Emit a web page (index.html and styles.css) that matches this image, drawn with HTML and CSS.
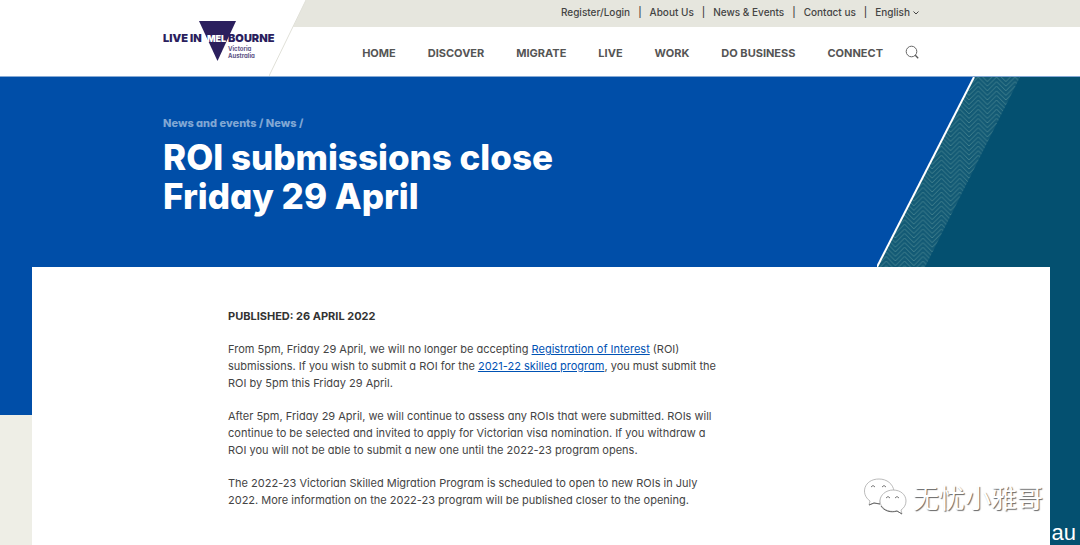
FILE: index.html
```html
<!DOCTYPE html>
<html lang="en">
<head>
<meta charset="utf-8">
<meta name="viewport" content="width=device-width, initial-scale=1">
<title>ROI submissions close Friday 29 April</title>
<link rel="stylesheet" href="styles.css">
</head>
<body>
<header class="site-header">
  <a class="brand" href="#" aria-label="Live in Melbourne, Victoria Australia">
    <svg class="logo" width="112" height="42" viewBox="0 0 112 42" aria-hidden="true">
      <polygon points="36,1 73,1 54.500,41" fill="#2b1f5e"/>
      <g class="logo-word">
        <text x="0" y="22">LIVE IN</text>
        <text class="logo-light" x="44" y="22">MEL</text>
        <text x="65" y="22">BOURNE</text>
      </g>
      <g class="logo-place">
        <text x="65" y="31">Victoria</text>
        <text x="65" y="38">Australia</text>
      </g>
    </svg>
  </a>
  <svg class="slant" width="37" height="76" viewBox="0 0 37 76" aria-hidden="true">
    <polygon points="37,0 24,27 37,27" fill="#e6e6de"/>
    <path d="M37 0 0 76" stroke="#e0e0d8" fill="none"/>
  </svg>
  <div class="menus">
    <nav class="top-menu" aria-label="Utility">
      <a href="#">Register/Login</a><span>|</span>
      <a href="#">About Us</a><span>|</span>
      <a href="#">News &amp; Events</a><span>|</span>
      <a href="#">Contact us</a><span>|</span>
      <button type="button" class="language">English
        <svg width="6" height="4" viewBox="0 0 6 4" aria-hidden="true"><path d="M.5.5 3 3 5.500.5" fill="none" stroke="currentColor"/></svg>
      </button>
    </nav>
    <nav class="main-menu" aria-label="Main">
      <a href="#">HOME</a>
      <a href="#">DISCOVER</a>
      <a href="#">MIGRATE</a>
      <a href="#">LIVE</a>
      <a href="#">WORK</a>
      <a href="#">DO BUSINESS</a>
      <a href="#">CONNECT</a>
      <button type="button" class="search" aria-label="Search">
        <svg width="14" height="16" viewBox="0 0 14 16" aria-hidden="true"><circle cx="6.500" cy="6.500" r="5.300" fill="none" stroke="#666"/><path d="m10.300 10.300 2.900 2.900" stroke="#555" stroke-width="1.300"/></svg>
      </button>
    </nav>
  </div>
</header>
<main class="page">
  <svg class="ribbon" width="203" height="190" viewBox="0 0 203 190" aria-hidden="true">
    <defs>
      <pattern id="waves" width="18.400" height="4.600" patternUnits="userSpaceOnUse">
        <path d="M-9.200 -9.200 0 0 9.200 -9.200 18.400 0 27.600 -9.200M-9.200 -4.600 0 4.600 9.200 -4.600 18.400 4.600 27.600 -4.600M-9.200 0 0 9.200 9.200 0 18.400 9.200 27.600 0M-9.200 4.600 0 13.800 9.200 4.600 18.400 13.800" fill="none" stroke="#458390" stroke-width=".9"/>
      </pattern>
    </defs>
    <polygon points="97,0 203,0 203,190 0,190" fill="#045070"/>
    <polygon points="97,0 143,0 48,190 0,190" fill="#135a75"/>
    <polygon points="97,0 143,0 48,190 0,190" fill="url(#waves)"/>
    <path d="M97 0 0 190" stroke="#fff" stroke-width="2"/>
  </svg>
  <div class="content">
    <div class="hero">
      <nav class="crumbs" aria-label="Breadcrumb"><a href="#">News and events</a> / <a href="#">News</a> /</nav>
      <h1>ROI submissions close<br>Friday 29 April</h1>
    </div>
    <article class="card">
      <div class="story">
        <p class="published">PUBLISHED: 26 APRIL 2022</p>
        <p>From 5pm, Friday 29 April, we will no longer be accepting <a href="#">Registration of Interest</a> (ROI)<br>submissions. If you wish to submit a ROI for the <a href="#">2021-22 skilled program</a>, you must submit the<br>ROI by 5pm this Friday 29 April.</p>
        <p>After 5pm, Friday 29 April, we will continue to assess any ROIs that were submitted. ROIs will<br>continue to be selected and invited to apply for Victorian visa nomination. If you withdraw a<br>ROI you will not be able to submit a new one until the 2022-23 program opens.</p>
        <p>The 2022-23 Victorian Skilled Migration Program is scheduled to open to new ROIs in July<br>2022. More information on the 2022-23 program will be published closer to the opening.</p>
      </div>
    </article>
  </div>
  <div class="watermark">
    <svg width="43" height="38" viewBox="0 0 43 38" aria-hidden="true">
      <g fill="#fff" stroke="#aaa" stroke-width=".8">
        <path d="M5 27 6 23C-4 16 0 1 15 1c8 0 14 5 15 12-9 0-15 6-14 13l-6-1Z"/>
        <path d="M29 12c8 0 13 5 13 11 0 4-2 7-5 9l1 4-5-3c-9 2-17-3-17-10 0-6 6-11 13-11Z"/>
      </g>
      <path d="M7 9q2-3 4 0M18 9q2-3 4 0M22 20q2-3 4 0M31 20q2-3 4 0" fill="none" stroke="#777"/>
      <path d="m5 27 5-2 6 1M17 28c3 5 10 7 16 5l5 3" fill="none" stroke="#666"/>
    </svg>
    <span lang="zh">无忧小雅哥</span>
  </div>
  <span class="domain">au</span>
</main>
</body>
</html>
```
FILE: styles.css
```css
:root {
  --gutter: max(24px, calc(50vw - 377px));
  --gutter-end: max(24px, calc(50vw - 379px));
  --blue: #004ea8;
  --teal: #045070;
}

* { box-sizing: border-box; }

body {
  margin: 0;
  min-height: 100vh;
  display: flex;
  flex-direction: column;
  font-family: Inter, "Noto Sans", sans-serif;
  font-feature-settings: "cv11";
  font-size: 11px;
  line-height: 17px;
  color: #444;
  background: #fff;
}

a { color: inherit; text-decoration: none; }

button {
  padding: 0;
  border: 0;
  background: none;
  color: inherit;
  font: inherit;
  font-feature-settings: inherit;
}

.site-header { display: flex; border-bottom: 1px solid #86aad5; }
.brand { padding: 20px 0 0 var(--gutter); line-height: 0; }
.slant { flex: none; margin-left: -6px; }
.menus { flex: 1; }

.logo-word { font-size: 11px; font-weight: 900; fill: #2b1f5e; }
.logo-word .logo-light { font-size: 9px; fill: #fff; }
.logo-place { font-size: 6px; font-weight: 700; fill: #5b5285; }

.top-menu {
  display: flex;
  justify-content: flex-end;
  align-items: center;
  gap: 8px;
  height: 27px;
  padding: 0 var(--gutter-end) 2px 0;
  background: #e6e6de;
  font-size: 10px;
  font-weight: 500;
}

.language { display: flex; align-items: center; gap: 3px; }

.main-menu {
  display: flex;
  justify-content: flex-end;
  align-items: center;
  gap: 32px;
  height: 49px;
  padding: 3px var(--gutter-end) 0 0;
  font-weight: 700;
  color: #555;
}

.search { display: flex; margin-left: -10px; }

.page {
  flex: 1;
  display: grid;
  background:
    linear-gradient(var(--teal), var(--teal)) right / 30px 100% no-repeat,
    linear-gradient(var(--blue) 338px, #eeeee6 338px);
}

.page > * { grid-area: 1 / 1; }
.ribbon { justify-self: end; }
.content { display: flex; flex-direction: column; }
.hero { padding: 38px var(--gutter) 51px; color: #fff; }
.crumbs { font-weight: 800; color: #80a7d4; }

h1 {
  margin: 6px 0 0;
  font-size: 35px;
  line-height: 39px;
  font-weight: 800;
}

.card { flex: 1; margin: 0 30px 0 32px; padding: 41px 24px 12px; background: #fff; }
.story { max-width: 626px; margin: 0 auto; }
.story p { margin: 0 0 16px; }
.story .published { font-weight: 700; color: #333; }
.story a { color: #0052b4; text-decoration: underline; }

.watermark {
  place-self: end;
  display: flex;
  align-items: center;
  gap: 6px;
  margin: 0 37px 29px 0;
  font-family: "Noto Sans CJK SC", sans-serif;
  font-size: 26px;
  line-height: 38px;
  color: #fff;
  text-shadow: 1px 1px 1px #666;
}

.domain {
  place-self: end;
  padding-right: 4px;
  font-family: "Liberation Sans", Arial, sans-serif;
  font-size: 22px;
  line-height: 24px;
  color: #fff;
}
```
